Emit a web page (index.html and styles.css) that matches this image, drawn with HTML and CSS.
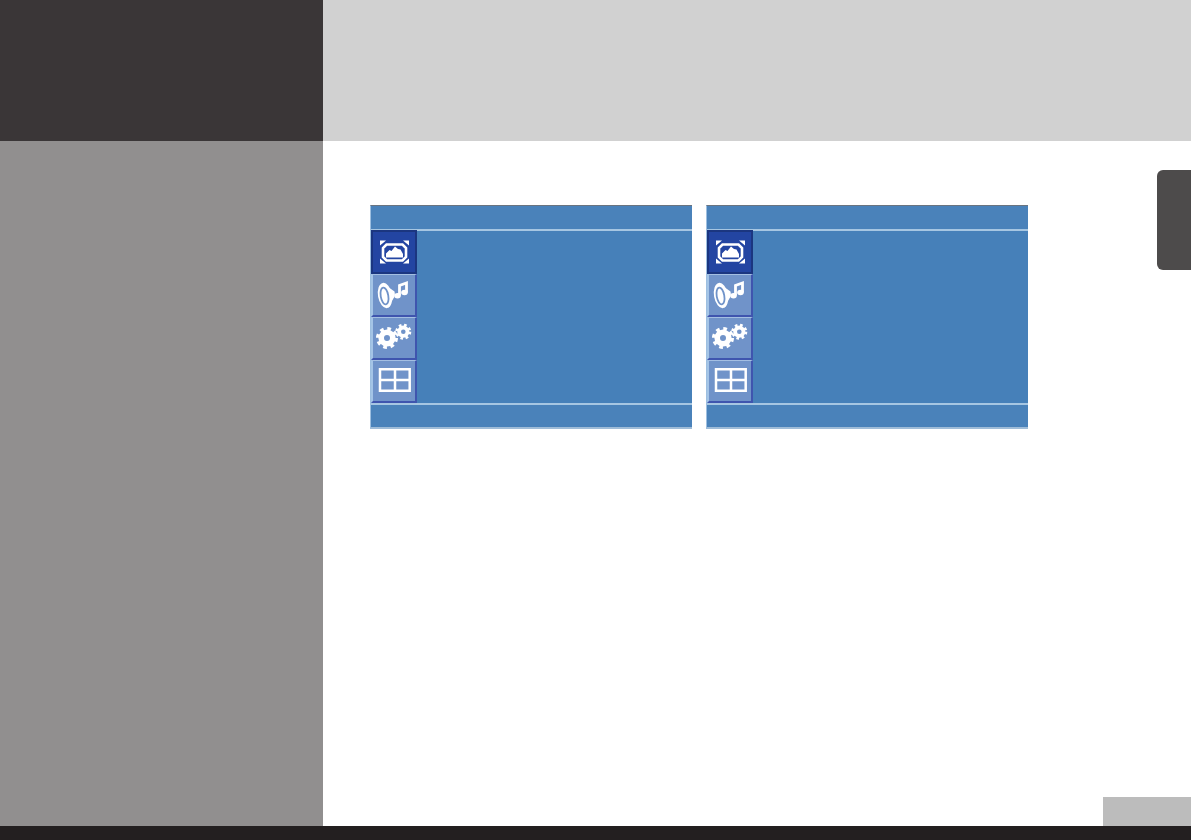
FILE: index.html
```html
<!DOCTYPE html>
<html lang="en">

<head>
    <meta charset="UTF-8">
    <title>Menu</title>
    <link rel="stylesheet" href="styles.css">
</head>

<body>
    <svg class="defs" xmlns="http://www.w3.org/2000/svg">
        <symbol id="ico-picture" viewBox="0 0 46 44">
            <path d="M15.500 14.500h16l3.500 3.500v9l-3.500 3.500h-16L12 27v-9z" fill="none" stroke="#fff" stroke-width="2.600"></path>
            <path d="M15 27.500v-4l3.500-3.500 2 1 3.500-4.500 3 2.500 2.500 .5 2.500 4.500v3.500z" fill="#fff"></path>
            <path d="M9 10.500h6L9 15.500zM38 10.500h-6L38 15.500zM9 33.500h6L9 28.500zM38 33.500h-6L38 28.500z" fill="#fff"></path>
        </symbol>
        <symbol id="ico-sound" viewBox="0 0 46 44">
            <ellipse cx="14" cy="21.500" rx="7" ry="12.800" transform="rotate(-10 14 21.500)" fill="#fff"></ellipse>
            <path d="M13 10l10.500 7.500c.5 2 .5 4-.5 6L17 34z" fill="#fff"></path>
            <ellipse cx="13.500" cy="22" rx="3.800" ry="8.500" transform="rotate(-10 13.500 22)" fill="#fff" stroke="#7093c9" stroke-width="1.800"></ellipse>
            <path d="M28.500 21.500V11.500l7-2.500v9.500" fill="none" stroke="#fff" stroke-width="2.800"></path>
            <ellipse cx="26.500" cy="21.800" rx="3.300" ry="2.700" fill="#fff"></ellipse>
            <ellipse cx="33.500" cy="18.500" rx="3.300" ry="2.700" fill="#fff"></ellipse>
        </symbol>
        <symbol id="ico-gears" viewBox="0 0 46 44">
            <circle cx="16" cy="21" r="5.800" fill="none" stroke="#fff" stroke-width="5.600"></circle>
            <circle cx="16" cy="21" r="9" fill="none" stroke="#fff" stroke-width="4" stroke-dasharray="3.530 3.540"></circle>
            <circle cx="32.300" cy="14.700" r="4.200" fill="none" stroke="#fff" stroke-width="3.800"></circle>
            <circle cx="32.300" cy="14.700" r="6.500" fill="none" stroke="#fff" stroke-width="3" stroke-dasharray="2.550 2.550"></circle>
        </symbol>
        <symbol id="ico-grid" viewBox="0 0 46 44">
            <path d="M9 9.300h29.700v21.400H9zM24 9.300v21.400M9 20h29.700" fill="none" stroke="#fff" stroke-width="2.500"></path>
        </symbol>
    </svg>

    <div class="page">
        <div class="top">
            <div class="top-left"></div>
            <div class="top-right"></div>
        </div>

        <div class="middle">
            <div class="side"></div>
            <div class="content">
                <div class="panels">
                    <div class="panel">
                        <div class="panel-head"></div>
                        <ul class="tabs">
                            <li class="active"><svg><use href="#ico-picture"></use></svg></li>
                            <li><svg><use href="#ico-sound"></use></svg></li>
                            <li><svg><use href="#ico-gears"></use></svg></li>
                            <li><svg><use href="#ico-grid"></use></svg></li>
                        </ul>
                        <div class="panel-foot"></div>
                    </div>
                    <div class="panel">
                        <div class="panel-head"></div>
                        <ul class="tabs">
                            <li class="active"><svg><use href="#ico-picture"></use></svg></li>
                            <li><svg><use href="#ico-sound"></use></svg></li>
                            <li><svg><use href="#ico-gears"></use></svg></li>
                            <li><svg><use href="#ico-grid"></use></svg></li>
                        </ul>
                        <div class="panel-foot"></div>
                    </div>
                </div>
                <div class="chapter"></div>
                <div class="page-no"></div>
            </div>
        </div>

        <div class="bottom"></div>
    </div>
</body>

</html>
```

FILE: styles.css
```css
* {
    margin: 0;
    padding: 0;
    box-sizing: border-box;
}

html,
body {
    height: 100%;
    overflow: hidden;
    background-color: #fff;
}

.defs {
    display: none;
}

.page {
    display: flex;
    flex-direction: column;
    height: 840px;
}

.top {
    display: flex;
    height: 141px;
}

.top-left {
    width: 323px;
    background-color: #3a3637;
}

.top-right {
    flex: 1;
    background-color: #d1d1d1;
}

.middle {
    display: flex;
    flex: 1;
}

.side {
    width: 323px;
    background-color: #918f8f;
}

.content {
    position: relative;
    display: flex;
    flex: 1;
    flex-direction: column;
    justify-content: space-between;
    align-items: flex-end;
}

.panels {
    display: flex;
    align-self: flex-start;
    gap: 14px;
    margin: 64px 0 0 47px;
}

.panel {
    width: 322px;
    height: 224px;
    background-color: #4680b9;
    border-top: 1px solid #6a7480;
    border-left: 1px solid #9dbfe0;
    border-bottom: 2px solid #9fbcd8;
}

.panel-head {
    height: 25px;
    background-color: #4a82ba;
    border-bottom: 2px solid #a6c6e2;
}

.panel-foot {
    height: 24px;
    background-color: #4a82ba;
    border-top: 2px solid #a6c6e2;
}

.tabs {
    height: 173px;
    margin-top: -1px;
    list-style: none;
}

.tabs li {
    width: 46px;
    height: 43px;
    background-color: #7093c9;
    border-top: 1px solid #a4bfe2;
    border-left: 2px solid #a4c4e6;
    border-right: 2px solid #3f55ae;
    border-bottom: 2px solid #3f55ae;
}

.tabs li:first-child {
    height: 44px;
}

.tabs .active {
    position: relative;
    background-color: #2345a2;
    border: 2px solid #1b3680;
}

.tabs svg {
    display: block;
    width: 46px;
    height: 44px;
    margin: -1px 0 0 -2px;
}

.tabs .active svg {
    margin: -2px 0 0 -2px;
}

/* grey tab on the page edge */
.chapter {
    position: absolute;
    top: 29px;
    right: 0;
    width: 34px;
    height: 100px;
    background-color: #4d4b4b;
    border-radius: 6px 0 0 6px;
}

.page-no {
    width: 88px;
    height: 29px;
    background-color: #bcbcbc;
}

.bottom {
    height: 14px;
    background-color: #231f20;
}
```
